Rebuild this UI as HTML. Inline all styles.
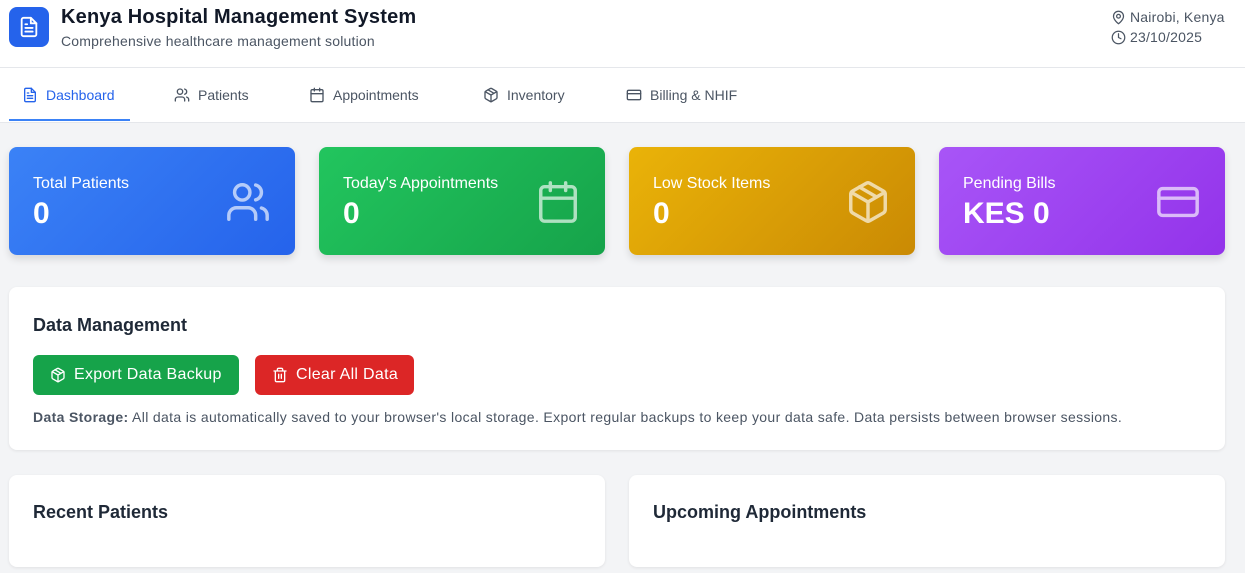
<!DOCTYPE html><html><head><style>
*{box-sizing:border-box;margin:0;padding:0}
body{width:1245px;height:573px;overflow:hidden;background:#f3f4f6;font-family:"Liberation Sans",sans-serif;color:#111827;position:relative}
.a{position:absolute}
svg{fill:none;stroke:currentColor;stroke-width:2;stroke-linecap:round;stroke-linejoin:round}
header{position:absolute;left:0;top:0;width:1245px;height:68px;background:#fff;border-bottom:1px solid #e5e7eb}
nav{position:absolute;left:0;top:68px;width:1245px;height:55px;background:#fff;border-bottom:1px solid #e5e7eb}
.tab{position:absolute;top:0;height:54px;display:flex;align-items:center;gap:8px;font-size:14px;color:#4b5563}
.card{position:absolute;top:147px;width:286px;height:108px;border-radius:8px;color:#fff;box-shadow:0 4px 8px rgba(0,0,0,.12)}
.card .l{position:absolute;left:24px;top:28px;font-size:16px}
.card .v{position:absolute;left:24px;top:50px;font-size:30px;font-weight:bold}
.card svg{position:absolute;right:24px;top:32px;width:46px;height:46px;stroke-width:1.8;opacity:.65}
.box{position:absolute;background:#fff;border-radius:8px;box-shadow:0 1px 3px rgba(0,0,0,.08)}
.btn{position:absolute;top:355px;height:40px;border-radius:6px;color:#fff;font-size:16px;display:flex;align-items:center;gap:8px;padding-left:17px;letter-spacing:.3px}
</style></head><body>
<header>
<div class="a" style="left:9px;top:7px;width:40px;height:40px;border-radius:8px;background:#2563eb;color:#fff"><svg style="position:absolute;left:9px;top:9px;width:22px;height:22px" viewBox="0 0 24 24"><path d="M14 2H6a2 2 0 0 0-2 2v16a2 2 0 0 0 2 2h12a2 2 0 0 0 2-2V8z"/><path d="M14 2v6h6M16 13H8M16 17H8M10 9H8"/></svg></div>
<div class="a" style="left:61px;top:6px;font-size:20px;font-weight:bold;letter-spacing:.2px">Kenya Hospital Management System</div>
<div class="a" style="left:61px;top:33px;font-size:14px;color:#4b5563;letter-spacing:.2px">Comprehensive healthcare management solution</div>
<div class="a" style="left:1111px;top:9px;font-size:14px;color:#4b5563;display:flex;align-items:center;gap:4px;letter-spacing:.2px"><svg width="15" height="15" viewBox="0 0 24 24"><path d="M20 10c0 6-8 12-8 12s-8-6-8-12a8 8 0 0 1 16 0z"/><circle cx="12" cy="10" r="3"/></svg>Nairobi, Kenya</div>
<div class="a" style="left:1111px;top:29px;font-size:14px;color:#4b5563;display:flex;align-items:center;gap:4px;letter-spacing:.2px"><svg width="15" height="15" viewBox="0 0 24 24"><circle cx="12" cy="12" r="10"/><path d="M12 6v6l4 2"/></svg>23/10/2025</div>
</header>
<nav>
<div class="tab" style="left:22px;color:#2563eb"><svg width="16" height="16" viewBox="0 0 24 24"><path d="M14 2H6a2 2 0 0 0-2 2v16a2 2 0 0 0 2 2h12a2 2 0 0 0 2-2V8z"/><path d="M14 2v6h6M16 13H8M16 17H8M10 9H8"/></svg>Dashboard</div>
<div class="a" style="left:9px;top:51px;width:121px;height:2px;background:#3b82f6"></div>
<div class="tab" style="left:174px"><svg width="16" height="16" viewBox="0 0 24 24"><path d="M16 21v-2a4 4 0 0 0-4-4H6a4 4 0 0 0-4 4v2"/><circle cx="9" cy="7" r="4"/><path d="M22 21v-2a4 4 0 0 0-3-3.87M16 3.13a4 4 0 0 1 0 7.75"/></svg>Patients</div>
<div class="tab" style="left:309px"><svg width="16" height="16" viewBox="0 0 24 24"><rect x="3" y="4" width="18" height="18" rx="2"/><path d="M16 2v4M8 2v4M3 10h18"/></svg>Appointments</div>
<div class="tab" style="left:483px"><svg width="16" height="16" viewBox="0 0 24 24"><path d="M21 16V8a2 2 0 0 0-1-1.73l-7-4a2 2 0 0 0-2 0l-7 4A2 2 0 0 0 3 8v8a2 2 0 0 0 1 1.73l7 4a2 2 0 0 0 2 0l7-4A2 2 0 0 0 21 16z"/><path d="M3.3 7 12 12l8.7-5M12 22V12M7.5 4.2l9 5.2"/></svg>Inventory</div>
<div class="tab" style="left:626px"><svg width="16" height="16" viewBox="0 0 24 24"><rect x="2" y="5" width="20" height="14" rx="2"/><path d="M2 10h20"/></svg>Billing &amp; NHIF</div>
</nav>
<div class="card" style="left:9px;background:linear-gradient(135deg,#3b82f6,#2563eb)"><div class="l">Total Patients</div><div class="v">0</div><svg viewBox="0 0 24 24"><path d="M16 21v-2a4 4 0 0 0-4-4H6a4 4 0 0 0-4 4v2"/><circle cx="9" cy="7" r="4"/><path d="M22 21v-2a4 4 0 0 0-3-3.87M16 3.13a4 4 0 0 1 0 7.75"/></svg></div>
<div class="card" style="left:319px;background:linear-gradient(135deg,#22c55e,#16a34a)"><div class="l">Today's Appointments</div><div class="v">0</div><svg viewBox="0 0 24 24"><rect x="3" y="4" width="18" height="18" rx="2"/><path d="M16 2v4M8 2v4M3 10h18"/></svg></div>
<div class="card" style="left:629px;background:linear-gradient(135deg,#eab308,#ca8a04)"><div class="l">Low Stock Items</div><div class="v">0</div><svg viewBox="0 0 24 24"><path d="M21 16V8a2 2 0 0 0-1-1.73l-7-4a2 2 0 0 0-2 0l-7 4A2 2 0 0 0 3 8v8a2 2 0 0 0 1 1.73l7 4a2 2 0 0 0 2 0l7-4A2 2 0 0 0 21 16z"/><path d="M3.3 7 12 12l8.7-5M12 22V12M7.5 4.2l9 5.2"/></svg></div>
<div class="card" style="left:939px;background:linear-gradient(135deg,#a855f7,#9333ea)"><div class="l">Pending Bills</div><div class="v">KES 0</div><svg viewBox="0 0 24 24"><rect x="2" y="5" width="20" height="14" rx="2"/><path d="M2 10h20"/></svg></div>
<div class="box" style="left:9px;top:287px;width:1216px;height:163px"></div>
<div class="a" style="left:33px;top:315px;font-size:18px;font-weight:bold;color:#1f2937">Data Management</div>
<div class="btn" style="left:33px;width:206px;background:#16a34a"><svg width="16" height="16" viewBox="0 0 24 24"><path d="M21 16V8a2 2 0 0 0-1-1.73l-7-4a2 2 0 0 0-2 0l-7 4A2 2 0 0 0 3 8v8a2 2 0 0 0 1 1.73l7 4a2 2 0 0 0 2 0l7-4A2 2 0 0 0 21 16z"/><path d="M3.3 7 12 12l8.7-5M12 22V12M7.5 4.2l9 5.2"/></svg>Export Data Backup</div>
<div class="btn" style="left:255px;width:159px;background:#dc2626"><svg width="16" height="16" viewBox="0 0 24 24"><path d="M3 6h18M19 6v14a2 2 0 0 1-2 2H7a2 2 0 0 1-2-2V6M8 6V4a2 2 0 0 1 2-2h4a2 2 0 0 1 2 2v2M10 11v6M14 11v6"/></svg>Clear All Data</div>
<div class="a" style="left:33px;top:409px;font-size:14px;letter-spacing:.35px;color:#4b5563;white-space:nowrap"><b>Data Storage:</b> All data is automatically saved to your browser's local storage. Export regular backups to keep your data safe. Data persists between browser sessions.</div>
<div class="box" style="left:9px;top:475px;width:596px;height:92px"></div>
<div class="box" style="left:629px;top:475px;width:596px;height:92px"></div>
<div class="a" style="left:33px;top:502px;font-size:18px;font-weight:bold;color:#1f2937">Recent Patients</div>
<div class="a" style="left:653px;top:502px;font-size:18px;font-weight:bold;color:#1f2937">Upcoming Appointments</div>
</body></html>
